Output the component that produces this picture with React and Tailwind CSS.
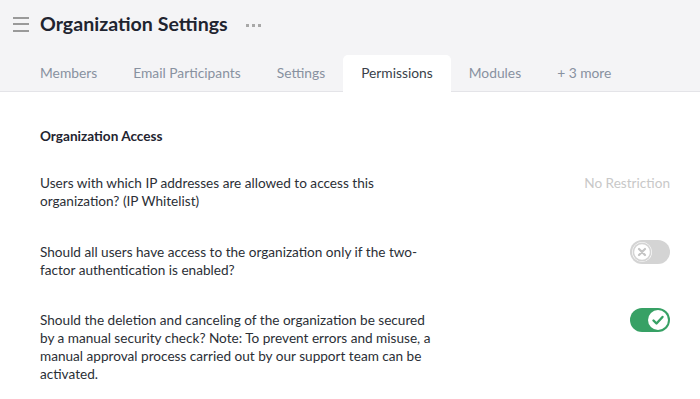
import React from "react";

const tabs = ["Members", "Email Participants", "Settings", "Permissions", "Modules", "+ 3 more"];

function Toggle({ on }) {
  return (
    <div
      className={`-mt-[3px] flex h-6 w-10 shrink-0 items-center rounded-full p-0.5 ${
        on ? "justify-end bg-[#37a165]" : "justify-start bg-[#d4d4d4]"
      }`}
    >
      <div className="flex h-5 w-5 items-center justify-center rounded-full bg-white">
        {on ? (
          <svg viewBox="0 0 20 20" className="h-5 w-5">
            <path d="M5.5 10.5l3 3 6-6.5" fill="none" stroke="#37a165" strokeWidth="2.4" strokeLinecap="round" strokeLinejoin="round" />
          </svg>
        ) : (
          <svg viewBox="0 0 20 20" className="h-5 w-5">
            <circle cx="10" cy="10" r="8.6" fill="white" stroke="#d4d4d4" strokeWidth="1.6" />
            <path d="M7 7l6 6M13 7l-6 6" fill="none" stroke="#c4c4c4" strokeWidth="2.2" strokeLinecap="round" />
          </svg>
        )}
      </div>
    </div>
  );
}

export default function App() {
  return (
    <div className="h-[399px] w-[700px] overflow-hidden bg-white font-['Lato',sans-serif] text-[13.6px] text-[#2b2f36]">
      <div className="bg-[#f4f4f6]">
        <div className="flex h-[47px] items-center pl-[13px] pt-[1px]">
          <div className="flex w-[16px] flex-col gap-[4.5px]">
            <span className="h-[2px] w-full bg-[#9a9a9a]" />
            <span className="h-[2px] w-full bg-[#9a9a9a]" />
            <span className="h-[2px] w-full bg-[#9a9a9a]" />
          </div>
          <h1 className="ml-[11px] text-[19.6px] font-bold text-[#1f2430]">Organization Settings</h1>
          <div className="ml-[18px] mt-[2px] flex gap-[3px]">
            <span className="h-[3px] w-[3px] bg-[#a8a8a8]" />
            <span className="h-[3px] w-[3px] bg-[#a8a8a8]" />
            <span className="h-[3px] w-[3px] bg-[#a8a8a8]" />
          </div>
        </div>
        <div className="flex h-[45px] items-end border-b border-[#e4e4e8] pl-[22px] pt-[8px] text-[13.8px]">
          {tabs.map((t) => (
            <div
              key={t}
              className={`-mb-px flex h-[37px] items-center rounded-t-[5px] px-[18px] pb-[1px] ${
                t === "Permissions" ? "bg-white text-[#3a3f4a]" : "text-[#8891a0]"
              }`}
            >
              {t}
            </div>
          ))}
        </div>
      </div>

      <div className="pl-[40px] pr-[30px] pt-[34px]">
        <h2 className="font-bold text-[#1f2430]">Organization Access</h2>
        <div className="mt-[28px] flex items-start justify-between">
          <p className="w-[395px] leading-[18px]">
            Users with which IP addresses are allowed to access this organization? (IP Whitelist)
          </p>
          <span className="leading-[18px] text-[#c8c8c8]">No Restriction</span>
        </div>
        <div className="mt-[33px] flex items-start justify-between">
          <p className="w-[395px] leading-[18px]">
            Should all users have access to the organization only if the two-factor authentication is enabled?
          </p>
          <Toggle on={false} />
        </div>
        <div className="mt-[32px] flex items-start justify-between">
          <p className="w-[400px] leading-[18px]">
            Should the deletion and canceling of the organization be secured by a manual security check? Note: To prevent errors and misuse, a manual approval process carried out by our support team can be activated.
          </p>
          <Toggle on={true} />
        </div>
      </div>
    </div>
  );
}
